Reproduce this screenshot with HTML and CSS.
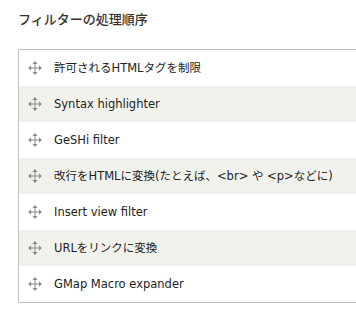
FILE: index.html
```html
<!DOCTYPE html>
<html lang="ja">
<head>
<meta charset="utf-8">
<link rel="stylesheet" href="styles.css">
</head>
<body>
<h2 class="title">フィルターの処理順序</h2>
<div class="list">
  <div class="row"><svg class="drag" viewBox="0 0 14 14"><path d="M7 2v10M2 7h10" /><path class="head" d="M7 0l-2.5 3h5zM7 14l-2.5-3h5zM0 7l3-2.5v5zM14 7l-3-2.5v5z"/></svg><span class="label">許可されるHTMLタグを制限</span></div>
  <div class="row alt"><svg class="drag" viewBox="0 0 14 14"><path d="M7 2v10M2 7h10" /><path class="head" d="M7 0l-2.5 3h5zM7 14l-2.5-3h5zM0 7l3-2.5v5zM14 7l-3-2.5v5z"/></svg><span class="label">Syntax highlighter</span></div>
  <div class="row"><svg class="drag" viewBox="0 0 14 14"><path d="M7 2v10M2 7h10" /><path class="head" d="M7 0l-2.5 3h5zM7 14l-2.5-3h5zM0 7l3-2.5v5zM14 7l-3-2.5v5z"/></svg><span class="label">GeSHi filter</span></div>
  <div class="row alt"><svg class="drag" viewBox="0 0 14 14"><path d="M7 2v10M2 7h10" /><path class="head" d="M7 0l-2.5 3h5zM7 14l-2.5-3h5zM0 7l3-2.5v5zM14 7l-3-2.5v5z"/></svg><span class="label">改行をHTMLに変換(たとえば、&lt;br&gt; や &lt;p&gt;などに)</span></div>
  <div class="row"><svg class="drag" viewBox="0 0 14 14"><path d="M7 2v10M2 7h10" /><path class="head" d="M7 0l-2.5 3h5zM7 14l-2.5-3h5zM0 7l3-2.5v5zM14 7l-3-2.5v5z"/></svg><span class="label">Insert view filter</span></div>
  <div class="row alt"><svg class="drag" viewBox="0 0 14 14"><path d="M7 2v10M2 7h10" /><path class="head" d="M7 0l-2.5 3h5zM7 14l-2.5-3h5zM0 7l3-2.5v5zM14 7l-3-2.5v5z"/></svg><span class="label">URLをリンクに変換</span></div>
  <div class="row"><svg class="drag" viewBox="0 0 14 14"><path d="M7 2v10M2 7h10" /><path class="head" d="M7 0l-2.5 3h5zM7 14l-2.5-3h5zM0 7l3-2.5v5zM14 7l-3-2.5v5z"/></svg><span class="label">GMap Macro expander</span></div>
</div>
</body>
</html>
```

FILE: styles.css
```css
html, body {
  margin: 0;
  padding: 0;
  background: #fff;
  overflow: hidden;
}
body {
  font-family: "DejaVu Sans", "Noto Sans CJK JP", sans-serif;
  color: #222;
}
.title {
  margin: 0;
  padding: 11px 0 0 18px;
  height: 38px;
  box-sizing: border-box;
  font-family: "Noto Sans CJK JP", sans-serif;
  font-size: 13px;
  font-weight: 500;
  line-height: 16px;
  color: #333;
}
.list {
  margin-left: 18px;
  margin-top: 11px;
  border: 1px solid #bfbfbf;
  border-right: none;
}
.row {
  height: 36px;
  display: flex;
  align-items: center;
  padding-left: 9px;
  gap: 12px;
}
.row.alt {
  background: #f2f2ed;
}
.drag {
  width: 14px;
  height: 14px;
  flex: none;
}
.drag path {
  stroke: #8a8a8a;
  stroke-width: 1;
  fill: none;
}
.drag path.head {
  stroke: none;
  fill: #8a8a8a;
}
.label {
  font-size: 11.5px;
  line-height: 14px;
  white-space: nowrap;
}
```
